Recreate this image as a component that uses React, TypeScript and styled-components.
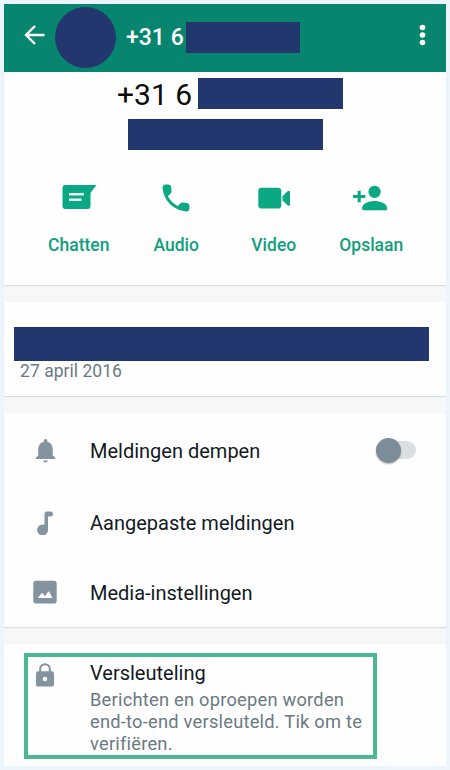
import React from "react";
import styled, { createGlobalStyle } from "styled-components";

const GlobalStyle = createGlobalStyle`
  * { box-sizing: border-box; }
  body { margin: 0; background: #ebf5fb; font-family: Roboto, sans-serif; }
`;

const Screen = styled.main`
  width: 450px;
  height: 770px;
  padding: 4px;
  background: #ebf5fb;
  overflow: hidden;
`;

const Phone = styled.div`
  height: 762px;
  display: flex;
  flex-direction: column;
  gap: 17px;
  background: #f5f7f9;
`;

const Section = styled.section<{ $height: number }>`
  flex: none;
  height: ${(p) => p.$height}px;
  background: #fefefe;
  box-shadow: 0 1px 1px #dcdfe0;
`;

const AppBar = styled.header`
  height: 67.5px;
  display: flex;
  align-items: center;
  padding: 0 16px 0 20px;
  background: #08856e;
`;

const BarIcon = styled.svg`
  flex: none;
  margin-bottom: 5px;

  &:last-child {
    margin-left: auto;
  }
`;

const Avatar = styled.div`
  width: 61px;
  height: 61px;
  margin-left: 10px;
  border-radius: 50%;
  background: #22376e;
`;

const Redaction = styled.div<{ $width: number; $height: number }>`
  flex: none;
  width: ${(p) => p.$width}px;
  height: ${(p) => p.$height}px;
  background: #22376e;
`;

const BarNumber = styled.div`
  width: 60px;
  margin-left: 10px;
  padding-top: 1px;
  font-size: 23px;
  font-weight: 500;
  line-height: 30px;
  white-space: nowrap;
  color: #fff;
`;

const Identity = styled.div`
  display: flex;
  flex-direction: column;
  padding-top: 6.5px;
  gap: 10px;
`;

const NumberLine = styled.div<{ $indent: number }>`
  display: flex;
  height: 31px;
  padding-left: ${(p) => p.$indent}px;
`;

const BigNumber = styled.div`
  width: 81px;
  font-size: 30px;
  line-height: 34px;
  white-space: nowrap;
  color: #0b0b0b;
`;

const Actions = styled.nav`
  display: grid;
  grid-template-columns: repeat(4, 97.5px);
  padding: 30px 0 0 26px;
`;

const Action = styled.div`
  display: flex;
  flex-direction: column;
  align-items: center;
  color: #0ba884;
`;

const ActionLabel = styled.span`
  margin-top: 17px;
  font-size: 17.5px;
  font-weight: 500;
  line-height: 24px;
  color: #10a07a;
`;

const About = styled.div`
  padding: 25px 0 0 10px;
`;

const AboutDate = styled.div`
  padding-left: 6px;
  font-size: 17.5px;
  line-height: 21px;
  letter-spacing: 0.04px;
  color: #6a7a83;
`;

const Settings = styled.div`
  display: grid;
  grid-template-rows: 75px 70px 69px;
`;

const Setting = styled.div`
  display: grid;
  grid-template-columns: 82px 1fr 40px;
  align-items: center;
  padding-right: 30px;
`;

const IconSlot = styled.div`
  display: flex;
  justify-content: center;
  padding-bottom: 1px;
  color: #83949e;
`;

const SettingLabel = styled.div`
  padding-left: 4px;
  font-size: 20px;
  line-height: 26px;
  color: #131a1f;
`;

const Toggle = styled.div`
  width: 40px;
  height: 18px;
  margin-bottom: 1px;
  border-radius: 9px;
  background: #dadfe2;
  display: flex;
  align-items: center;
`;

const Knob = styled.div`
  width: 25px;
  height: 25px;
  border-radius: 50%;
  background: #7b8d98;
  box-shadow: 0 1px 2px rgba(0, 0, 0, 0.3);
`;

const EncryptionSection = styled(Section)`
  padding-top: 9px;
  box-shadow: none;
`;

const Highlight = styled.div`
  display: grid;
  grid-template-columns: 62px 1fr;
  width: 353px;
  height: 106px;
  margin-left: 20px;
  border: 4px solid #4cb795;
`;

const LockSlot = styled.div`
  padding: 6px 0 0 7px;
  color: #83949e;
`;

const Encryption = styled.div`
  padding-top: 3px;
`;

const EncryptionTitle = styled.div`
  font-size: 20px;
  line-height: 26px;
  color: #131a1f;
`;

const EncryptionText = styled.div`
  margin-top: 3px;
  font-size: 18.3px;
  line-height: 22px;
  letter-spacing: 0.23px;
  white-space: nowrap;
  color: #6a7a83;
`;

const ChatIcon = () => (
  <svg width="36" height="36" viewBox="0 0 36 36" fill="currentColor">
    <path d="M4.5 5h31l-6 8v13a3 3 0 0 1-3 3h-22a3 3 0 0 1-3-3V8a3 3 0 0 1 3-3Z" />
    <path d="M8 14.2h15M8 19.8h12.5" stroke="#eefaf6" strokeWidth="2.5" />
  </svg>
);

const CallIcon = () => (
  <svg width="36" height="36" viewBox="0 0 24 24" fill="currentColor">
    <path d="m19.23 15.26-2.54-.29a1.99 1.99 0 0 0-1.64.57l-1.84 1.84a15.05 15.05 0 0 1-6.59-6.59l1.85-1.85c.43-.43.64-1.03.57-1.64l-.29-2.52A2 2 0 0 0 6.76 3H5.03c-1.13 0-2.07.94-2 2.07.53 8.54 7.36 15.36 15.89 15.89 1.13.07 2.07-.87 2.07-2v-1.73c.01-1.01-.75-1.86-1.76-1.97Z" />
  </svg>
);

const VideoIcon = () => (
  <svg width="36" height="36" viewBox="0 0 36 36" fill="currentColor">
    <rect x="2.3" y="7.8" width="23" height="20.8" rx="3.4" />
    <path d="M26.5 16.2 31.5 11.2q2.5-1.4 2.5 1v12q0 2.4-2.5 1L26.5 20.2Z" />
  </svg>
);

const SaveIcon = () => (
  <svg width="37" height="36" viewBox="1 .3 24 23.35" fill="currentColor">
    <path d="M15 12a4 4 0 1 0 0-8 4 4 0 0 0 0 8Zm-9-2V7.2H4V10H1v2h3v2.8h2V12h3v-2H6Zm9 4c-2.67 0-8 1.34-8 4v2h16v-2c0-2.66-5.33-4-8-4Z" />
  </svg>
);

const BellIcon = () => (
  <svg width="29" height="29" viewBox="0 0 24 24" fill="currentColor">
    <path d="M12 22a2 2 0 0 0 2-1.7h-4A2 2 0 0 0 12 22Zm6-6v-5c0-3.1-1.64-5.64-4.5-6.32V4a1.5 1.5 0 0 0-3 0v.68C7.63 5.36 6 7.9 6 11v5l-2 2v1h16v-1l-2-2Z" />
  </svg>
);

const NoteIcon = () => (
  <svg width="18" height="24" viewBox="0 0 18 24" fill="currentColor">
    <path d="M8.5 3A2.5 2.5 0 0 1 11 .5h3.5a2.5 2.5 0 0 1 0 5H12V18a5.5 5.5 0 1 1-3.5-4.2Z" />
  </svg>
);

const ImageIcon = () => (
  <svg width="24" height="24" viewBox="0 0 24 24" fill="currentColor">
    <rect x=".3" y=".7" width="23.4" height="22.8" rx="2.8" />
    <path d="m4.8 18 3.5-4.6q.8-1 1.5 0l2.3 2.9 2.8-4.2q.8-1 1.5 0L19.4 18Z" fill="#fefefe" />
  </svg>
);

const LockIcon = () => (
  <svg width="20" height="24" viewBox="0 0 20 24">
    <path d="M5.2 10V5.8a4.8 4.6 0 0 1 9.6 0V10" fill="none" stroke="currentColor" strokeWidth="2" />
    <rect x="1" y="8.2" width="18" height="15.4" rx="2.2" fill="currentColor" />
    <circle cx="10" cy="16" r="2.3" fill="#fefefe" />
  </svg>
);

const actions = [
  { label: "Chatten", icon: <ChatIcon /> },
  { label: "Audio", icon: <CallIcon /> },
  { label: "Video", icon: <VideoIcon /> },
  { label: "Opslaan", icon: <SaveIcon /> },
];

const settings = [
  { label: "Meldingen dempen", icon: <BellIcon />, toggle: true },
  { label: "Aangepaste meldingen", icon: <NoteIcon /> },
  { label: "Media-instellingen", icon: <ImageIcon /> },
];

export default function App() {
  return (
    <Screen>
      <GlobalStyle />
      <Phone>
        <Section $height={281}>
          <AppBar>
            <BarIcon width="21" height="20" viewBox="0 0 21 20" fill="none" stroke="#fff" strokeWidth="2.4">
              <path d="M20.5 10H2M11 1 2 10l9 9" />
            </BarIcon>
            <Avatar />
            <BarNumber>+31 6</BarNumber>
            <Redaction $width={114} $height={31} />
            <BarIcon width="15" height="24" viewBox="0 0 15 24" fill="#fff">
              <circle cx="7.5" cy="4.5" r="2.8" />
              <circle cx="7.5" cy="12" r="2.8" />
              <circle cx="7.5" cy="19.5" r="2.8" />
            </BarIcon>
          </AppBar>
          <Identity>
            <NumberLine $indent={113}>
              <BigNumber>+31 6</BigNumber>
              <Redaction $width={145} $height={31} />
            </NumberLine>
            <NumberLine $indent={124}>
              <Redaction $width={195} $height={31} />
            </NumberLine>
          </Identity>
          <Actions>
            {actions.map((a) => (
              <Action key={a.label}>
                {a.icon}
                <ActionLabel>{a.label}</ActionLabel>
              </Action>
            ))}
          </Actions>
        </Section>
        <Section $height={94}>
          <About>
            <Redaction $width={415} $height={34} />
            <AboutDate>27 april 2016</AboutDate>
          </About>
        </Section>
        <Section $height={214}>
          <Settings>
            {settings.map((s) => (
              <Setting key={s.label}>
                <IconSlot>{s.icon}</IconSlot>
                <SettingLabel>{s.label}</SettingLabel>
                {s.toggle && (
                  <Toggle>
                    <Knob />
                  </Toggle>
                )}
              </Setting>
            ))}
          </Settings>
        </Section>
        <EncryptionSection $height={122}>
          <Highlight>
            <LockSlot>
              <LockIcon />
            </LockSlot>
            <Encryption>
              <EncryptionTitle>Versleuteling</EncryptionTitle>
              <EncryptionText>
                Berichten en oproepen worden
                <br />
                end-to-end versleuteld. Tik om te
                <br />
                verifiëren.
              </EncryptionText>
            </Encryption>
          </Highlight>
        </EncryptionSection>
      </Phone>
    </Screen>
  );
}
